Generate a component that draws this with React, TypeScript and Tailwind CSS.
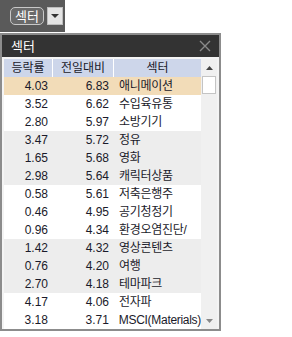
import React from "react";

const rows = [
  { a: "4.03", b: "6.83", name: "애니메이션" },
  { a: "3.52", b: "6.62", name: "수입육유통" },
  { a: "2.80", b: "5.97", name: "소방기기" },
  { a: "3.47", b: "5.72", name: "정유" },
  { a: "1.65", b: "5.68", name: "영화" },
  { a: "2.98", b: "5.64", name: "캐릭터상품" },
  { a: "0.58", b: "5.61", name: "저축은행주" },
  { a: "0.46", b: "4.95", name: "공기청정기" },
  { a: "0.96", b: "4.34", name: "환경오염진단/" },
  { a: "1.42", b: "4.32", name: "영상콘텐츠" },
  { a: "0.76", b: "4.20", name: "여행" },
  { a: "2.70", b: "4.18", name: "테마파크" },
  { a: "4.17", b: "4.06", name: "전자파" },
  { a: "3.18", b: "3.71", name: "MSCI(Materials)" },
];

const font = { fontFamily: '"Liberation Sans", "Noto Sans CJK KR", sans-serif' };

function rowBg(i: number) {
  if (i === 0) return "bg-[#f2dcb8]";
  return Math.floor(i / 3) % 2 === 1 ? "bg-[#ededed]" : "bg-white";
}

export default function App() {
  return (
    <div className="w-[292px] h-[337px] bg-white text-[12px] text-[#1a1a2a]" style={font}>
      <div className="w-[65px] h-[32px] bg-[#5a5a5a] flex items-center pl-[10px] gap-[3px]">
        <div className="w-[34px] h-[18px] rounded-[5px] border border-[#c8c8c8] bg-[#6a6a6a] flex items-center justify-center text-white text-[13px] leading-none">
          섹터
        </div>
        <div className="w-[16px] h-[18px] bg-[#e4e4e4] border border-[#bdbdbd] flex items-center justify-center">
          <svg width="8" height="5" viewBox="0 0 8 5">
            <path d="M0 0 L8 0 L4 4 Z" fill="#333" />
          </svg>
        </div>
      </div>

      <div className="mt-[1px] w-[221px] border-2 border-[#8c8c8c] bg-[#f4f4f4]">
        <div className="h-[22px] bg-[#333333] flex items-center justify-between pl-[9px] pr-[8px]">
          <span className="text-white text-[13px] leading-none">섹터</span>
          <svg width="12" height="12" viewBox="0 0 12 12">
            <path d="M1 1 L11 11 M11 1 L1 11" stroke="#8a8a8a" strokeWidth="1.4" />
          </svg>
        </div>
        <div className="flex mt-[2px] pl-[2px]">
          <div className="w-[197px] bg-white">
            <div className="flex h-[18px] bg-[#cdd6ea] leading-[18px]">
              <div className="w-[49px] text-center border-r border-white">등락률</div>
              <div className="w-[61px] text-center border-r border-white">전일대비</div>
              <div className="flex-1 text-center">섹터</div>
            </div>
            {rows.map((r, i) => (
              <div key={i} className={`flex h-[18px] leading-[18px] ${rowBg(i)}`}>
                <div className="w-[49px] text-right pr-[5px]">{r.a}</div>
                <div className="w-[61px] text-right pr-[5px]">{r.b}</div>
                <div className="flex-1 pl-[5px] whitespace-nowrap tracking-[-0.3px]">{r.name}</div>
              </div>
            ))}
          </div>
          <div className="w-[16px] flex flex-col bg-[#f0f0f0]">
            <div className="h-[17px] flex items-center justify-center">
              <svg width="7" height="4" viewBox="0 0 7 4">
                <path d="M0 4 L7 4 L3.5 0 Z" fill="#444" />
              </svg>
            </div>
            <div className="h-[18px] mx-[1px] bg-white border border-[#c4c4c4]" />
            <div className="flex-1" />
            <div className="h-[17px] flex items-center justify-center">
              <svg width="7" height="4" viewBox="0 0 7 4">
                <path d="M0 0 L7 0 L3.5 4 Z" fill="#888" />
              </svg>
            </div>
          </div>
        </div>
      </div>
    </div>
  );
}
